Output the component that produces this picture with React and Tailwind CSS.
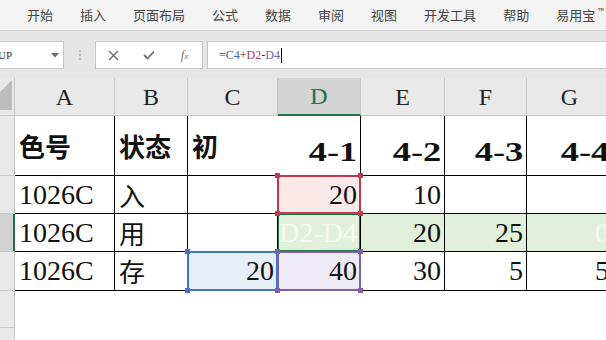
import React from "react";

const serif = "font-['Liberation_Serif','Noto_Sans_CJK_SC',serif]";
const cjk = "font-['Noto_Sans_CJK_SC',sans-serif]";

const tabs = ["开始", "插入", "页面布局", "公式", "数据", "审阅", "视图", "开发工具", "帮助"];
const letters = ["A", "B", "C", "D", "E", "F", "G"];

// selection frame drawn over a cell
const Sel = ({ frame, dot, handles }) => (
  <div className={`pointer-events-none absolute -left-px -top-px -right-px -bottom-px border-2 ${frame}`}>
    {handles && (
      <>
        <span className={`absolute -left-[4px] -top-[4px] w-[5px] h-[5px] ${dot}`} />
        <span className={`absolute -right-[4px] -top-[4px] w-[5px] h-[5px] ${dot}`} />
        <span className={`absolute -left-[4px] -bottom-[4px] w-[5px] h-[5px] ${dot}`} />
        <span className={`absolute -right-[4px] -bottom-[4px] w-[5px] h-[5px] ${dot}`} />
      </>
    )}
  </div>
);

const Cell = ({ className = "", children, right, zh, sel }) => (
  <div
    className={`relative flex items-center overflow-hidden whitespace-nowrap leading-none ${
      right ? "justify-end pr-[3px]" : "pl-[4px]"
    } ${zh ? `${cjk} text-[26px] pl-[3px]` : `${serif} text-[28px]`} text-[#111] ${className}`}
  >
    {children}
    {sel}
  </div>
);

const Title = ({ children }) => (
  <span className="inline-block origin-right scale-x-[1.3] translate-y-[6px]">{children}</span>
);

const RowHead = ({ active }) => (
  <div
    className={
      active
        ? "bg-[#d2d2d2] border-b border-[#c8c8c8] border-r-2 border-r-[#217346]"
        : "bg-[#e9e9e9] border-b border-r border-[#c8c8c8]"
    }
  />
);

export default function App() {
  return (
    <div className="w-[606px] h-[340px] overflow-hidden bg-white flex flex-col">
      <div className="h-[2px] bg-[#217346]" />

      {/* ribbon tabs */}
      <div className={`h-[31px] shrink-0 bg-[#f3f3f3] border-b border-[#d4d4d4] flex items-center pl-[27px] gap-[27px] ${cjk} text-[13px] text-[#444] whitespace-nowrap`}>
        {tabs.map((t) => (
          <span key={t}>{t}</span>
        ))}
        <span>
          易用宝 <span className="text-[8px] align-top">™</span>
        </span>
      </div>

      {/* formula bar */}
      <div className="h-[47px] shrink-0 bg-[#e6e6e6] pt-[10px] flex items-start">
        <div className="-ml-px w-[65px] h-[28px] bg-white border border-[#c6c6c6] flex items-center justify-between pr-[4px]">
          <span className={`${serif} text-[11px] text-[#333] -ml-[2px]`}>UP</span>
          <svg width="8" height="5" viewBox="0 0 8 5">
            <path d="M0 0h8L4 4.5z" fill="#6b6b6b" />
          </svg>
        </div>
        <div className="w-[31px] h-[28px] flex flex-col items-center justify-center gap-[2px]">
          <span className="w-[2px] h-[2px] bg-[#bdbdbd]" />
          <span className="w-[2px] h-[2px] bg-[#bdbdbd]" />
          <span className="w-[2px] h-[2px] bg-[#bdbdbd]" />
        </div>
        <div className="w-[108px] h-[28px] bg-white border border-[#c6c6c6] flex items-center">
          <div className="w-[35px] flex justify-center">
            <svg width="11" height="11" viewBox="0 0 11 11">
              <path d="M1 1l9 9M10 1l-9 9" stroke="#6d6d6d" strokeWidth="1.4" />
            </svg>
          </div>
          <div className="w-[36px] flex justify-center">
            <svg width="12" height="10" viewBox="0 0 12 10">
              <path d="M1 5l3.5 3.5L11 1.5" stroke="#6d6d6d" strokeWidth="1.8" fill="none" />
            </svg>
          </div>
          <div className="w-[35px] flex justify-center">
            <span className={`${serif} italic text-[13px] text-[#777]`}>
              f<span className="text-[9px]">x</span>
            </span>
          </div>
        </div>
        <div className={`ml-[4px] flex-1 h-[28px] bg-white border-y border-l border-[#c6c6c6] flex items-center pl-[11px] ${serif} text-[12px] text-[#333]`}>
          <span>=</span>
          <span className="text-[#3a64b5]">C4</span>
          <span>+</span>
          <span className="text-[#b3384d]">D2</span>
          <span>-</span>
          <span className="text-[#7a5ca6]">D4</span>
          <span className="w-px h-[15px] bg-black ml-px" />
        </div>
      </div>

      {/* sheet */}
      <div className="grid grid-cols-[15px_100px_73px_90px_83px_84px_82px_86px] grid-rows-[38px_60px_38px_38px_39px_37px_37px]">
        {/* column headers */}
        <div className="relative bg-[#e9e9e9] border-r border-b border-[#c8c8c8]">
          <svg className="absolute left-0 top-0" width="14" height="37" viewBox="0 0 14 37">
            <polygon points="12,2 12,32 -18,32" fill="#bcbcbc" />
          </svg>
        </div>
        {letters.map((l) =>
          l === "D" ? (
            <div key={l} className={`bg-[#d3d3d3] border-r border-r-[#c8c8c8] border-b-2 border-b-[#217346] flex items-center justify-center ${serif} text-[24px] text-[#217346]`}>
              {l}
            </div>
          ) : (
            <div key={l} className={`bg-[#e9e9e9] border-r border-b border-[#c8c8c8] flex items-center justify-center ${serif} text-[24px] text-[#222]`}>
              {l}
            </div>
          )
        )}

        {/* row 1 */}
        <RowHead />
        <Cell zh className="font-bold border-r border-b border-black">色号</Cell>
        <Cell zh className="font-bold border-r border-b border-black">状态</Cell>
        <Cell zh className="font-bold border-b border-black">初</Cell>
        <Cell right className="font-bold border-r border-b border-black"><Title>4-1</Title></Cell>
        <Cell right className="font-bold border-r border-b border-black"><Title>4-2</Title></Cell>
        <Cell right className="font-bold border-r border-b border-black"><Title>4-3</Title></Cell>
        <Cell right className="font-bold border-r border-b border-black"><Title>4-4</Title></Cell>

        {/* row 2 */}
        <RowHead />
        <Cell className="border-r border-b border-black">1026C</Cell>
        <Cell zh className="border-r border-b border-black">入</Cell>
        <Cell className="border-r border-b border-black" />
        <Cell right className="overflow-visible z-10 bg-[#fbe8e8] border-r border-b border-black" sel={<Sel frame="border-[#c0394d]" dot="bg-[#c0394d]" handles />}>
          20
        </Cell>
        <Cell right className="border-r border-b border-black">10</Cell>
        <Cell className="border-r border-b border-black" />
        <Cell className="border-r border-b border-black" />

        {/* row 3 */}
        <RowHead active />
        <Cell className="border-r border-b border-black">1026C</Cell>
        <Cell zh className="border-r border-b border-black">用</Cell>
        <Cell className="border-r border-b border-black" />
        <Cell right className="z-0 bg-[#e2efda] border-r border-b border-black text-[#f6faf2]!" sel={<Sel frame="border-[#217346]" />}>
          D2-D4
        </Cell>
        <Cell right className="bg-[#e2efda] border-r border-b border-black">20</Cell>
        <Cell right className="bg-[#e2efda] border-r border-b border-black">25</Cell>
        <Cell right className="bg-[#e2efda] border-r border-b border-black text-[#f6faf2]!">0</Cell>

        {/* row 4 */}
        <RowHead />
        <Cell className="border-r border-b border-black">1026C</Cell>
        <Cell zh className="border-r border-b border-black">存</Cell>
        <Cell right className="overflow-visible z-10 bg-[#e8eef8] border-r border-b border-black" sel={<Sel frame="border-[#4472c4]" dot="bg-[#4472c4]" handles />}>
          20
        </Cell>
        <Cell right className="overflow-visible z-10 bg-[#efebf6] border-r border-b border-black" sel={<Sel frame="border-[#7f5fa9]" dot="bg-[#7f5fa9]" handles />}>
          40
        </Cell>
        <Cell right className="border-r border-b border-black">30</Cell>
        <Cell right className="border-r border-b border-black">5</Cell>
        <Cell right className="border-r border-b border-black">5</Cell>

        {/* rows 5-6 */}
        <RowHead />
        <div className="col-span-7" />
        <RowHead />
        <div className="col-span-7" />
      </div>
    </div>
  );
}
